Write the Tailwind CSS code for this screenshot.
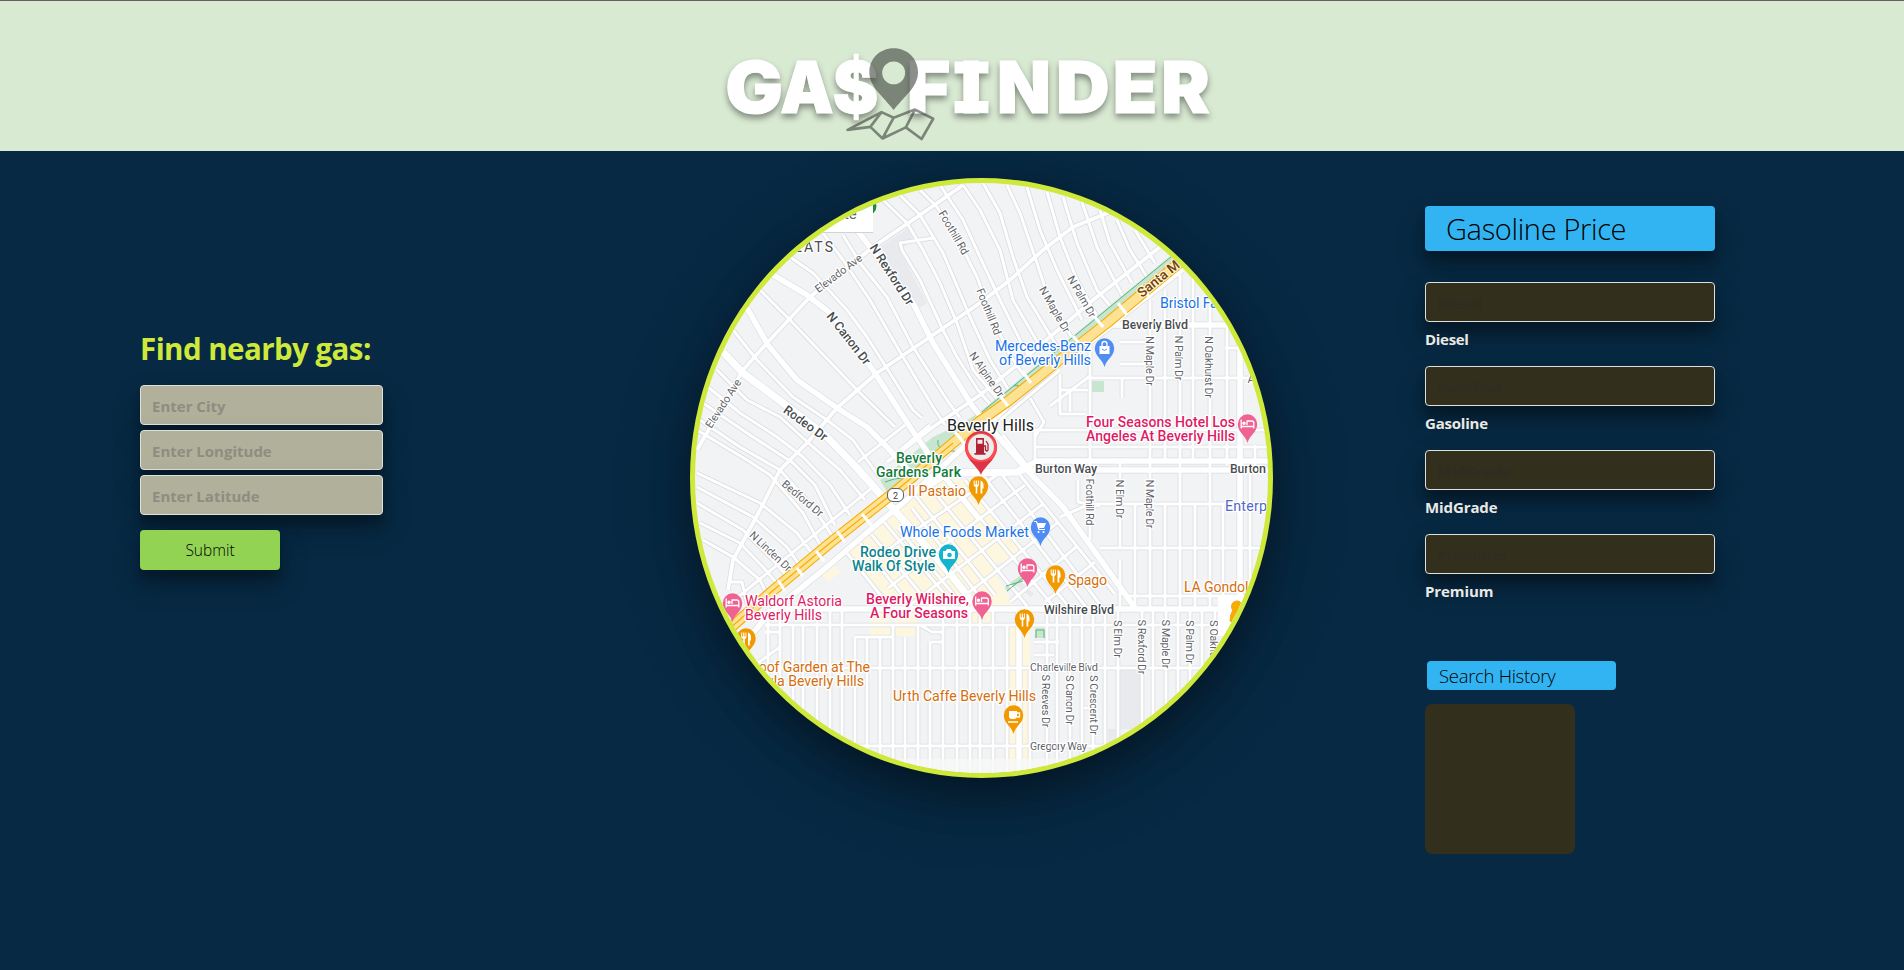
<!DOCTYPE html>
<html lang="en">
<head>
<meta charset="utf-8">
<title>Gas Finder</title>
<script src="https://cdn.jsdelivr.net/npm/@tailwindcss/browser@4"></script>
</head>
<body class="h-[970px] overflow-hidden bg-[#072943] font-['Open_Sans','Noto_Sans',sans-serif] text-black">
<header class="relative z-10 flex h-[151px] justify-center border-t border-[#646165] bg-[#d9ead3] pl-[26px]">
  <svg class="h-[150px] w-[530px] overflow-visible" viewBox="700 1 530 150" role="img" aria-label="Gas Finder">
    <g transform="translate(700 30) scale(1.014) translate(-700 -30)">
    <g class="drop-shadow-[0_4px_3px_rgba(0,0,0,0.4)]" fill="#fff" stroke="#fff" stroke-width="1" font-family="Inter" font-weight="900" font-size="70">
      <text x="725" y="112" textLength="57" lengthAdjust="spacingAndGlyphs">G</text>
      <text x="779" y="112" textLength="53" lengthAdjust="spacingAndGlyphs">A</text>
      <text x="831" y="112" textLength="45" lengthAdjust="spacingAndGlyphs">$</text>
      <text x="904" y="112" textLength="43" lengthAdjust="spacingAndGlyphs">F</text>
      <text x="957" y="112" textLength="21" lengthAdjust="spacingAndGlyphs">I</text>
      <path d="M951.500 61.500h32.500v11h-32.500zM951.500 100.500h32.500v11h-32.500z"/>
      <text x="993" y="112" textLength="53" lengthAdjust="spacingAndGlyphs">N</text>
      <text x="1051" y="112" textLength="53" lengthAdjust="spacingAndGlyphs">D</text>
      <text x="1107" y="112" textLength="44" lengthAdjust="spacingAndGlyphs">E</text>
      <text x="1155" y="112" textLength="48" lengthAdjust="spacingAndGlyphs">R</text>
    </g>
    <g opacity=".57">
      <path fill="#343a34" fill-rule="evenodd" d="M891 48c-14 0-24 10.500-24 24 0 14 14 24 24 37 10-13 24-23 24-37 0-13.500-10-24-24-24zm0 13a11.300 11.300 0 1 1 0 22.600 11.300 11.300 0 0 1 0-22.600z"/>
      <path fill="none" stroke="#343a34" stroke-width="2.600" stroke-linejoin="round" d="M845.500 128.500 879 111l12 5.500 21-8 18 9-11.500 20L903 126l-23 11-12-11.500zM879 111l-11 14.500M891 116.500 880 137M912 108.500 903 126"/>
    </g>
    </g>
  </svg>
</header>
<main class="flex h-[819px] items-start">
  <section class="w-[690px] shrink-0 pl-[140px] pt-[176px]">
    <h1 class="h-[58px] pt-0.5 text-[29.500px] leading-[40px] font-bold tracking-[-0.55px] text-[#cfe93b]">Find nearby gas:</h1>
    <form class="flex w-[243px] flex-col gap-[5px] text-[15px] font-bold">
      <input placeholder="Enter City" class="h-[40px] rounded-[4px] border border-[#dfdfdb] bg-[#b1b09b] px-[11px] pt-px shadow-[0_14px_28px_rgba(0,0,0,0.25),0_10px_10px_rgba(0,0,0,0.22)] placeholder:text-[#8d8d80]">
      <input placeholder="Enter Longitude" class="h-[40px] rounded-[4px] border border-[#dfdfdb] bg-[#b1b09b] px-[11px] pt-px shadow-[0_14px_28px_rgba(0,0,0,0.25),0_10px_10px_rgba(0,0,0,0.22)] placeholder:text-[#8d8d80]">
      <input placeholder="Enter Latitude" class="h-[40px] rounded-[4px] border border-[#dfdfdb] bg-[#b1b09b] px-[11px] pt-px shadow-[0_14px_28px_rgba(0,0,0,0.25),0_10px_10px_rgba(0,0,0,0.22)] placeholder:text-[#8d8d80]">
      <button type="button" class="mt-[10px] h-[40px] w-[140px] rounded-[4px] bg-[#92d353] pt-0.5 text-[15.500px] font-[350] shadow-[0_14px_28px_rgba(0,0,0,0.25),0_10px_10px_rgba(0,0,0,0.22)]">Submit</button>
    </form>
  </section>
  <section class="mt-[27px] h-[600px] w-[583px] shrink-0 overflow-hidden rounded-[50%] border-[5px] border-[#cfe93b] bg-[#cfe93b] shadow-[0_19px_38px_rgba(0,0,0,0.3),0_15px_80px_rgba(0,0,0,0.22)]">
    <svg class="block h-[590px] w-[573px]" viewBox="695 183 573 590" font-family="Roboto" stroke-linejoin="round">
      <defs>
        <path id="pin" d="M0 0C-2-8-9.700-10.500-9.700-19A9.700 9.700 0 0 1 9.700-19C9.700-10.500 2-8 0 0z"/>
        <g id="fork" fill="#fff"><path d="M-4.800-24.500h1v4h1v-4h1.200v4h1v-4h1v4.500q0 1.500-1.600 2v6.500h-1.600v-6.500q-2-.5-2-2zM2-24.500q3 1 3 5v3H3.800v5H2z"/></g>
        <g id="bed" fill="none" stroke="#fff" stroke-width="1.300"><path d="M-6.300-23.500v9M-6.300-16.500H6.300v-3.500q0-2-2-2H-.5v4M6.300-17v2.500"/><circle cx="-3.500" cy="-19.800" r="1.100" fill="#fff"/></g>
        <g id="minor">
          <path d="M790 257 813 273 847 310 867 337 888 370 913 410 922 418M823 233 843 260 870 300 903 357 933 407 945 425M843 235 860 263 887 297 913 347 947 400 960 418M933 238 900 243 902 250 920 280 943 330 957 357 978 390 990 404M883 200 907 223 923 250 940 283 957 323 973 370 1000 402M900 195 920 215 943 253 960 293 970 317 990 360 1010 392M920 190 937 207 960 243 977 277 993 320 1010 355 1027 380M940 185 963 220 980 257 1000 300 1020 340 1034 365M963 185 980 210 1000 250 1013 300 1042 350M983 183 1000 213 1013 257 1027 297 1047 330 1058 348M1007 185 1020 213 1037 263 1050 303 1075 342M1027 187 1040 230 1057 270 1082 320M1047 192 1060 237 1077 280 1098 318M1063 197 1077 243 1097 290 1112 308M1082 202 1097 247 1123 297M1100 210 1110 243 1132 283M1117 220 1130 250 1147 277M1135 230 1155 263"/>
          <path d="M733 330 757 360 793 397 827 420 853 440 880 478M760 290 790 320 857 390 895 427M717 370 747 400 780 417 813 447 840 470 865 500M708 387 740 413 777 437 803 457 830 485 850 515M703 403 747 433 793 463 815 485 835 525M700 420 740 447 780 470 813 507 833 537M697 430 747 460 770 475 803 513 823 550M697 473 760 503 797 533 817 560M697 487 753 517 787 547 803 570M697 503 743 530 773 560 790 580M700 523 740 543 763 567 780 587M703 540 733 557 760 580 768 597M873 487 820 530 738 597M900 450 930 425M858 462 905 425M728 582h14l5 22"/>
          <path d="M1090 330V540M1090 504H1260M1035 430V470M1035 430H1268M1035 447H1268M1090 378H1268M1060 374v40h25M1060 390h28M1070 390v22M1120 342h30M1120 364h30M1122 378v20M1120 462v86M1120 560v50M1150 300V610M1165 290v170M1180 275v185M1193 275v185M1210 290v170M1227 325v140M1165 504v106M1180 462v148M1195 504v106M1210 462v148M1223 504v106M1135 504v106M1100 548H1265M1128 596H1245M1250 470v130M1255 445v30M1225 348h30M1078 480l0 22 22 4M1060 517l30-13"/>
          <path d="M765 668H1220M730 746H1180M765 625H1025M1030 625H1210M793 625v180M803 625v180M817 609v180M830 609v180M842 609v180M855 637v140M867 637v140M880 637v140M893 625v155M905 637v140M918 625v155M930 642v140M943 609v170M957 609v170M970 609v170M980 609v170M993 609v170M1007 625v150M1030 668v110M1047 609v170M1057 609v170M1070 609v170M1082 609v170M1093 609v170M1105 609v170M1118 609v160M1142 609v140M1153 609v120M1166 609v120M1178 609v90M1190 609v90M1202 609v70M1215 609v50M768 609v95M780 609v100M765 632h14M855 637h38M755 665l25-18M920 625l12 7h10M931 642h12M1034 642h25M1034 655h20M1084 708h9"/>
          <path d="M847 553 890 607M860 543 912 607M871 534 932 607M884 522 953 604M898 528 964 607M912 508 982 600M914 494 995 595M930 487 1027 606M946 477 1054 607M965 480 1069 607M982 474 1086 607M1000 472 1102 607M1020 475 1115 594M1003 435 1033 473M870 563 908 535 997 475M888 588 940 548 1025 485M910 605 1043 504M952 605 985 580 1057 523M1010 602 1076 547M1045 602 1095 562M1035 437 1044 422 1030 398M1050 406l40-30M1000 420 1060 370"/>
        </g>
        <path id="cross" d="M963 185 920 215 873 247 810 297 767 343 743 370 697 450M1110 212 1073 227 1043 250 1010 280 980 303 930 337 877 373 837 408 807 443 780 470 760 510 733 560 728 590M1160 247 1093 300 1023 360 980 395 933 427 887 462M1183 270 1127 313 1107 330 1007 405"/>
        <path id="main" d="M770 273 807 295 830 313 873 370 910 427 943 475 980 520M853 225 870 247 913 303 933 343 973 407 1007 447 1027 470 1063 507 1135 608M747 308 768 345 797 380 837 408 867 427 887 447 915 478M1107 330V325H1232M780 609H1255M1240 325V609M1019 609V775M1007 407 903 503 870 530 827 567 770 613 738 650M1022 469 1037 461H1273M1030 470H1273"/>
        <path id="wide" d="M723 352 743 373 783 403 827 437 857 468 897 513 947 570 975 605M925 488 947 473 1017 472 1030 466"/>
      </defs>
      <path fill="#f1f3f4" d="M690 178h583v600H690z"/>
      <path fill="#e8eaed" d="M880 247l28-19 5 12-13 10 27 53-13 8zM1120 669h20v60h-20zM1108 729h10v20h-10zM1016 585l4-4 14 13-3 3z"/>
      <path fill="#fef7e0" d="M937 478 964 480 1023 548 1010 560 990 565 1014 605 895 605 845 555 870 535 900 505zM822 575l13-9 6 6-12 9zM870 613h20v26h-20zM895 612h22v24h-22zM972 612h20v14h-20zM1009 627h8v148h-8zM1023 612h7v165h-7z"/>
      <path fill="#c8e6cf" d="M1172 255 1178 259 985 418 980 412zM880 480 887 492 900 484 950 447 1003 402 997 400 963 423 933 437zM837 531 860 513 863 520 841 537zM793 569 823 544 828 549 798 574zM762 597 786 576 790 581 767 600zM1092 381h12v11h-12zM1005 587l16-12 3 4-17 13zM1035 628h10v10h-10z"/>
      <g fill="none" stroke="#d9dce0"><use href="#minor" stroke-width="4.600"/><use href="#cross" stroke-width="5.200"/><use href="#main" stroke-width="6.800"/><use href="#wide" stroke-width="8.500"/></g>
      <g fill="none" stroke="#fff"><use href="#minor" stroke-width="3"/><use href="#cross" stroke-width="3.800"/><use href="#main" stroke-width="5.600"/><use href="#wide" stroke-width="7.500"/></g>
      <path fill="#c8e6cf" d="M1172 255 1178 259 985 418 980 412zM890 483 950 439 955 442 898 488z"/>
      <path fill="none" stroke="#51af70" stroke-width=".9" d="M1172 256 982 412M885 482q20-8 28 0M920 465q15-15 35-14M938 440q-2 10 10 8M838 533l20-8M841 535l17-19M800 570l25-22M1007 591l16-13M1006 586l17-5M1036 638v-8h8v8M762 596l27-21M1014 386l4-1v4M820 547l5-2 3 5"/>
      <g fill="none" stroke-linecap="butt">
        <path stroke="#f9ab00" stroke-width="11" d="M1185 258 1107 323 1057 362 1007 402 980 421 953 443 897 490 830 543 770 593 728 630"/>
        <path stroke="#fde293" stroke-width="8.800" d="M1185 258 1107 323 1057 362 1007 402 980 421 953 443 897 490 830 543 770 593 728 630"/>
        <path stroke="#f9ab00" stroke-width="1.100" d="M953 443 897 490 830 543 770 593 728 630"/>
        <path stroke="#fff" stroke-width="3" d="M1141 286l9 12M1118 303l9 12M1093 315l10 12M1073 336l8 10M1022 371l9 12M1000 396l8 10M955 432l12 15M862 514l10 12M837 531l8 11M816 551l8 10M797 568l6 8M778 580l7 11"/>
      </g>
      <circle cx="867" cy="206" r="9.500" fill="#1e8e3e"/><path fill="#fff" d="M820 178h53v54h-53z"/><path stroke="#d0d2d5" d="M820 232.500h53"/>
      <path fill="#f8f8f8" fill-opacity=".75" d="M690 759h583v20H690z"/>
      <g paint-order="stroke" stroke="#fff" stroke-width="2.600">
        <g fill="#5f6368" font-size="11" text-anchor="middle" dominant-baseline="middle">
          <text transform="translate(839 274) rotate(-37)" textLength="56">Elevado Ave</text>
          <text transform="translate(724 404) rotate(-57)" textLength="56">Elevado Ave</text>
          <text transform="translate(953 233) rotate(60)" textLength="49">Foothill Rd</text>
          <text transform="translate(988 312) rotate(68)" textLength="49">Foothill Rd</text>
          <text transform="translate(1054 310) rotate(60)" textLength="51">N Maple Dr</text>
          <text transform="translate(1081 297) rotate(60)" textLength="46">N Palm Dr</text>
          <text transform="translate(986 375) rotate(55)" textLength="52">N Alpine Dr</text>
          <text transform="translate(802 499) rotate(40)" textLength="50">Bedford Dr</text>
          <text transform="translate(770 552) rotate(43)" textLength="53">N Linden Dr</text>
          <text transform="translate(1149 361) rotate(90)" textLength="50">N Maple Dr</text>
          <text transform="translate(1178 358) rotate(90)" textLength="45">N Palm Dr</text>
          <text transform="translate(1208 367) rotate(90)" textLength="62">N Oakhurst Dr</text>
          <text transform="translate(1089 502) rotate(90)" textLength="47">Foothill Rd</text>
          <text transform="translate(1119 499) rotate(90)" textLength="39">N Elm Dr</text>
          <text transform="translate(1149 504) rotate(90)" textLength="49">N Maple Dr</text>
          <text transform="translate(1117 639) rotate(90)" textLength="38">S Elm Dr</text>
          <text transform="translate(1141 647) rotate(90)" textLength="55">S Rexford Dr</text>
          <text transform="translate(1165 644) rotate(90)" textLength="49">S Maple Dr</text>
          <text transform="translate(1189 642) rotate(90)" textLength="44">S Palm Dr</text>
          <text transform="translate(1045 701) rotate(90)" textLength="53">S Reeves Dr</text>
          <text transform="translate(1069 700) rotate(90)" textLength="50">S Canon Dr</text>
          <text transform="translate(1093 705) rotate(90)" textLength="60">S Crescent Dr</text>
          <text transform="translate(1213 651) rotate(90)" textLength="62">S Oakhurst Dr</text>
          <text transform="translate(1251 380)">A</text>
        </g>
        <path fill="#fff" stroke="none" d="M1218 596h50v40h-50z"/>
        <path fill="#f9ab00" stroke="#e08a00" stroke-width=".8" d="M1233 610q-3 4-3 11l3 1 3-7v10h9v-10l3 7V613q-2-4-6-4z"/><circle cx="1237" cy="606.500" r="5.500" fill="#f9ab00" stroke="#e08a00" stroke-width=".8"/>
        <g fill="#5f6368" font-size="11"><text x="1030" y="671" textLength="68">Charleville Blvd</text><text x="1030" y="750" textLength="57">Gregory Way</text></g>
        <g fill="#484c50" font-size="12.500" font-weight="500" text-anchor="middle" dominant-baseline="middle">
          <text transform="translate(891 275) rotate(57)" textLength="70">N Rexford Dr</text>
          <text transform="translate(848 339) rotate(52)" textLength="63">N Canon Dr</text>
          <text transform="translate(805 424) rotate(36)" textLength="51">Rodeo Dr</text>
        </g>
        <g fill="#484c50" font-size="12.500" font-weight="500">
          <text x="1122" y="329" textLength="66">Beverly Blvd</text><text x="1035" y="473" textLength="62">Burton Way</text><text x="1230" y="473" textLength="36">Burton</text><text x="1044" y="614" textLength="70">Wilshire Blvd</text>
          <text x="794" y="252" font-weight="400" font-size="14" textLength="39">EATS</text>
        </g>
        <text transform="translate(1142 298) rotate(-39)" fill="#713f12" stroke="#fff2c8" font-size="13.500" font-weight="500">Santa Monica</text>
        <text x="947" y="430.500" fill="#202124" font-size="16" textLength="87">Beverly Hills</text>
        <g fill="#137b3b" font-size="14" font-weight="500"><text x="896" y="463" textLength="46">Beverly</text><text x="876" y="477" textLength="85">Gardens Park</text></g>
        <g fill="#1a73e8" font-size="14.300"><text x="995" y="351" textLength="96">Mercedes-Benz</text><text x="999" y="365" textLength="92">of Beverly Hills</text><text x="1160" y="308" textLength="82">Bristol Farms</text><text x="900" y="537" textLength="129">Whole Foods Market</text></g>
        <text x="1225" y="511" fill="#5468c4" font-size="14.300" textLength="66">Enterprise</text>
        <g fill="#e01b65" font-size="14.200"><g font-weight="500"><text x="1086" y="427" textLength="149">Four Seasons Hotel Los</text><text x="1086" y="441" textLength="149">Angeles At Beverly Hills</text><text x="866" y="604" textLength="103">Beverly Wilshire,</text><text x="870" y="618" textLength="98">A Four Seasons</text></g><text x="745" y="606" textLength="97">Waldorf Astoria</text><text x="745" y="620" textLength="77">Beverly Hills</text></g>
        <g fill="#0b858e" font-size="14.200" font-weight="500"><text x="860" y="557" textLength="76">Rodeo Drive</text><text x="852" y="571" textLength="83">Walk Of Style</text></g>
        <g fill="#d56e0c" font-size="14.200"><text x="908" y="496" textLength="58">Il Pastaio</text><text x="1068" y="585" textLength="39">Spago</text><text x="1184" y="592" textLength="72">LA Gondola</text><text x="750" y="672" textLength="120">Roof Garden at The</text><text x="864" y="686" textLength="113" text-anchor="end">nsula Beverly Hills</text><text x="893" y="701" textLength="143">Urth Caffe Beverly Hills</text></g>
      </g>
      <text x="833" y="219" fill="#5f6368" font-size="15">llite</text>
      <rect x="887.500" y="488.500" width="16" height="13" rx="5.500" fill="#fff" stroke="#5f6368"/><text x="895.500" y="498.500" text-anchor="middle" font-size="9" fill="#3c4043">2</text>
      <g fill="#f29900">
        <use href="#pin" x="978.500" y="505"/><use href="#pin" x="1055.500" y="594"/><use href="#pin" x="1024.500" y="638"/><use href="#pin" x="746" y="657"/><use href="#pin" x="1013.500" y="734"/>
      </g>
      <use href="#fork" x="978.500" y="505"/><use href="#fork" x="1055.500" y="594"/><use href="#fork" x="1024.500" y="638"/><use href="#fork" x="746" y="657"/>
      <path fill="none" stroke="#fff" stroke-width="1.400" d="M1017 713h2.500v4H1017M1008 722h10"/><path fill="#fff" d="M1009 711h8v5q0 3-3 3h-2q-3 0-3-3z"/>
      <g fill="#f06292"><use href="#pin" x="1027.500" y="587"/><use href="#pin" x="982" y="620"/><use href="#pin" x="732.500" y="622"/><use href="#pin" x="1247.500" y="443"/></g>
      <use href="#bed" x="1027.500" y="587"/><use href="#bed" x="982" y="620"/><use href="#bed" x="732.500" y="622"/><use href="#bed" x="1247.500" y="443"/>
      <g fill="#4f8df5"><use href="#pin" x="1104.500" y="367"/><use href="#pin" x="1040.500" y="546"/></g>
      <path fill="#fff" d="M1099.500 346h10v8h-10z"/><path fill="none" stroke="#fff" stroke-width="1.300" d="M1102 346v-2a2.500 2.500 0 0 1 5 0v2"/><path fill="none" stroke="#4f8df5" d="M1102 349q2.500 3 5 0"/>
      <path fill="#fff" d="M1037 523h9l-2 5h-6z"/><path fill="none" stroke="#fff" stroke-width="1.200" d="M1034 521.500h2.500l2.500 8h6"/><circle cx="1038.500" cy="532" r="1.100" fill="#fff"/><circle cx="1043.500" cy="532" r="1.100" fill="#fff"/>
      <use href="#pin" x="948.500" y="573" fill="#12b5cb"/><path fill="#fff" d="M943 551h2.500l1.500-2h3.500l1.500 2h3v8h-12z"/><circle cx="949.500" cy="555" r="2.300" fill="#12b5cb"/>
      <path fill="#dc3545" d="M981 475c-3-9-16-15-16-28a16 16 0 0 1 32 0c0 13-13 19-16 28z"/><path fill="#ff4b50" d="M965 449a16 16 0 1 1 32 0q-1 6-5 10-11 6-22 0-4-4-5-10z"/><circle cx="981" cy="447" r="13" fill="#ececec"/>
      <path fill="#b22234" fill-rule="evenodd" d="M976 438h8v15h1.500v1.700h-11V453h1.500zm1.500 1.800v4h5v-4z"/><path fill="none" stroke="#b22234" stroke-width="1.300" d="M984 446h1.500v4q1.500 2 2.500 0v-6l-2-3"/>
    </svg>
  </section>
  <section class="ml-[152px] w-[290px] pt-[55px]">
    <h2 class="h-[45px] rounded-[4px] bg-[#33b4f2] pl-[21px] text-[29px] leading-[46px] font-[350] tracking-[-0.35px] shadow-[0_14px_28px_rgba(0,0,0,0.25),0_10px_10px_rgba(0,0,0,0.22)]">Gasoline Price</h2>
    <div class="mt-[31px] flex flex-col text-[15px] font-bold text-[#ebe9e4]">
      <div class="h-[84px]"><input placeholder="Diesel" class="block h-[40px] w-full rounded-[4px] border border-[#dfdfdb] bg-[#322f1c] px-[11px] pt-px shadow-[0_14px_28px_rgba(0,0,0,0.25),0_10px_10px_rgba(0,0,0,0.22)] placeholder:text-[#2e2d22]"><p class="relative pt-[6px] leading-[22px] tracking-[-0.3px]">Diesel</p></div>
      <div class="h-[84px]"><input placeholder="Gasoline" class="block h-[40px] w-full rounded-[4px] border border-[#dfdfdb] bg-[#322f1c] px-[11px] pt-px shadow-[0_14px_28px_rgba(0,0,0,0.25),0_10px_10px_rgba(0,0,0,0.22)] placeholder:text-[#2e2d22]"><p class="relative pt-[6px] leading-[22px] tracking-[-0.2px]">Gasoline</p></div>
      <div class="h-[84px]"><input placeholder="MidGrade" class="block h-[40px] w-full rounded-[4px] border border-[#dfdfdb] bg-[#322f1c] px-[11px] pt-px shadow-[0_14px_28px_rgba(0,0,0,0.25),0_10px_10px_rgba(0,0,0,0.22)] placeholder:text-[#2e2d22]"><p class="relative pt-[6px] leading-[22px] tracking-[-0.1px]">MidGrade</p></div>
      <div class="h-[84px]"><input placeholder="Premium" class="block h-[40px] w-full rounded-[4px] border border-[#dfdfdb] bg-[#322f1c] px-[11px] pt-px shadow-[0_14px_28px_rgba(0,0,0,0.25),0_10px_10px_rgba(0,0,0,0.22)] placeholder:text-[#2e2d22]"><p class="relative pt-[6px] leading-[22px] tracking-[-0.1px]">Premium</p></div>
    </div>
    <h3 class="mt-[43px] ml-[2px] h-[29px] w-[189px] rounded-[4px] bg-[#33b4f2] pl-[12px] text-[18.500px] leading-[30px] font-[350] tracking-[-0.3px]">Search History</h3>
    <div class="mt-[14px] size-[150px] rounded-[7px] bg-[#322f1c]"></div>
  </section>
</main>
</body>
</html>
